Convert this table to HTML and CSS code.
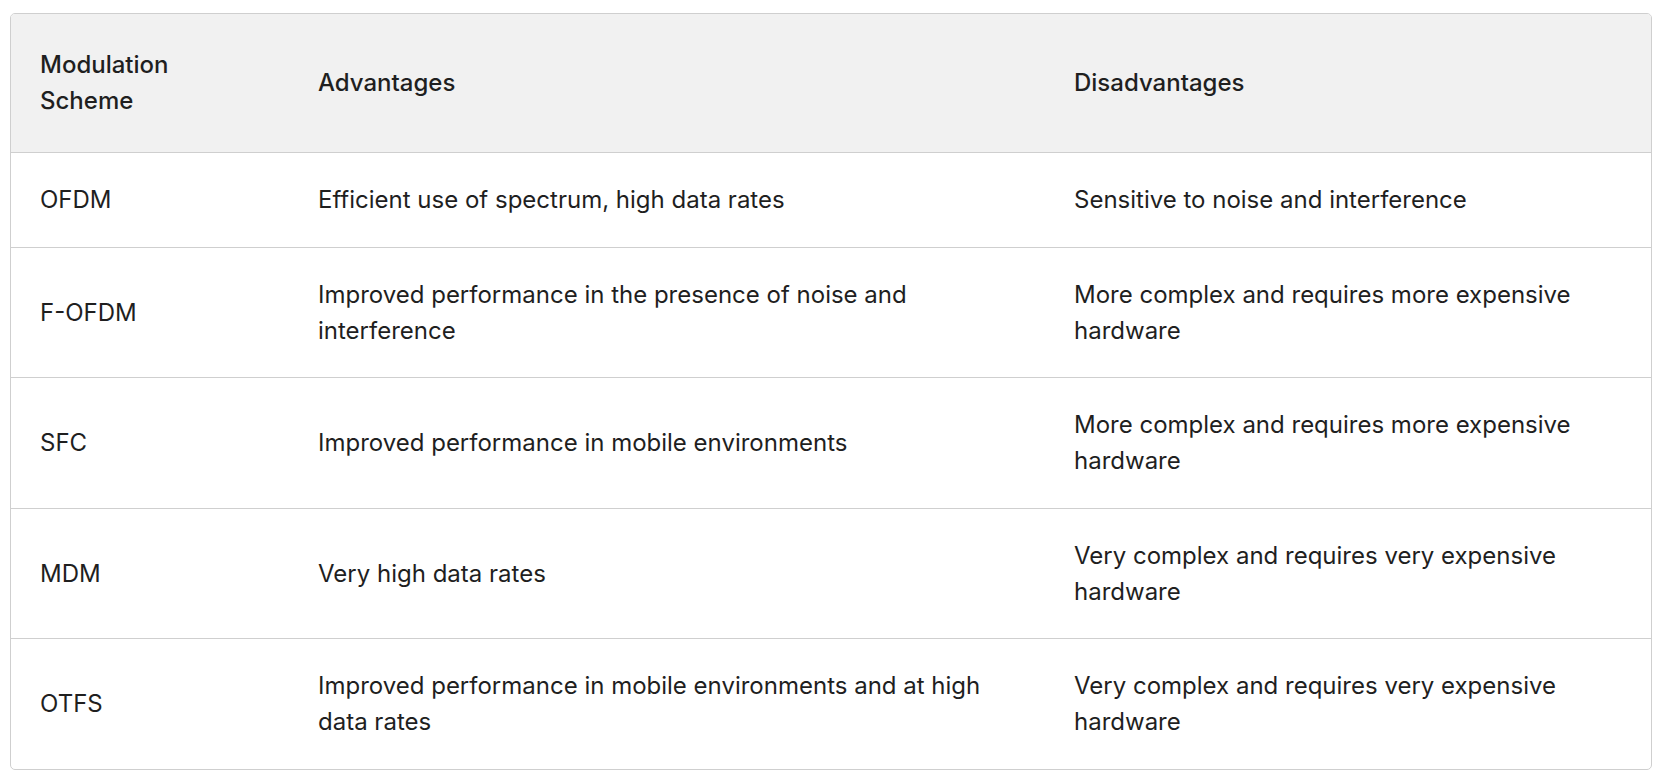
FILE: index.html
```html
<!DOCTYPE html>
<html>
<head>
<meta charset="utf-8">
<link rel="stylesheet" href="styles.css">
</head>
<body>
<div class="table-wrap">
<table class="data">
<colgroup>
<col class="c1">
<col class="c2">
<col class="c3">
</colgroup>
<thead>
<tr><th>Modulation Scheme</th><th>Advantages</th><th>Disadvantages</th></tr>
</thead>
<tbody>
<tr><td>OFDM</td><td>Efficient use of spectrum, high data rates</td><td>Sensitive to noise and interference</td></tr>
<tr><td>F-OFDM</td><td>Improved performance in the presence of noise and interference</td><td>More complex and requires more expensive hardware</td></tr>
<tr><td>SFC</td><td>Improved performance in mobile environments</td><td>More complex and requires more expensive hardware</td></tr>
<tr><td>MDM</td><td>Very high data rates</td><td>Very complex and requires very expensive hardware</td></tr>
<tr><td>OTFS</td><td>Improved performance in mobile environments and at high data rates</td><td>Very complex and requires very expensive hardware</td></tr>
</tbody>
</table>
</div>
</body>
</html>
```

FILE: styles.css
```css
html, body {
  margin: 0;
  padding: 0;
  background: #ffffff;
}
body {
  padding: 13px 12px 0 10px;
  font-family: Inter, "Noto Sans", sans-serif;
  color: #1f1f1f;
}
.table-wrap {
  border: 1px solid #cfcfcf;
  border-radius: 5px;
  overflow: hidden;
}
.data {
  width: 100%;
  border-collapse: collapse;
  table-layout: fixed;
  font-size: 24px;
  line-height: 36px;
}
.c1 { width: 278px; }
.c2 { width: 756px; }
.c3 { width: auto; }
.data th {
  background: #f1f1f1;
  font-weight: 500;
  text-align: left;
  padding: 33px 29px 33px 29px;
  height: 72px;
}
.data td {
  padding: 29px 29px 28.5px 29px;
  border-top: 1px solid #cfcfcf;
  vertical-align: middle;
}
```
